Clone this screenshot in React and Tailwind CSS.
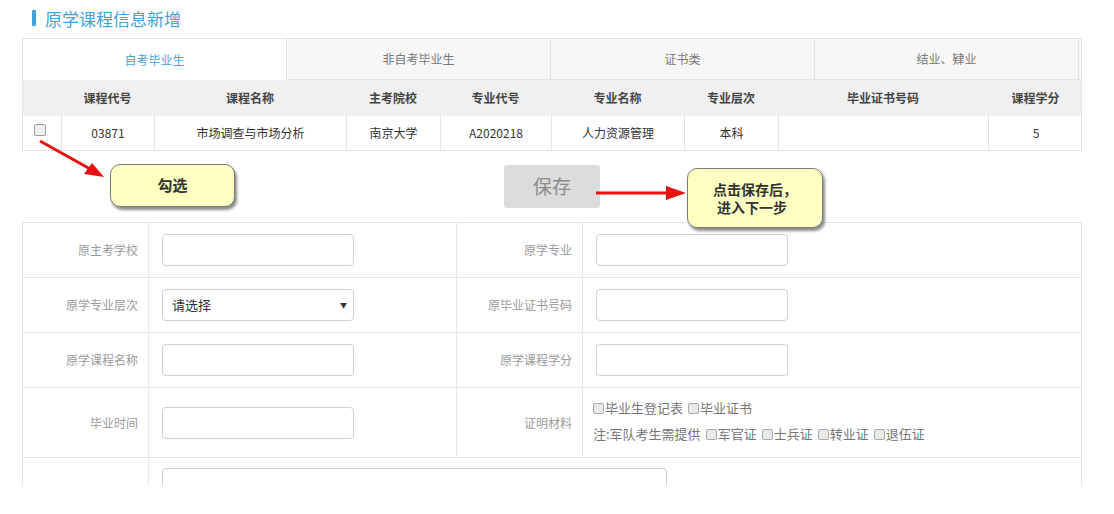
import React from "react";

const font = { fontFamily: '"Noto Sans CJK SC", "Noto Sans", sans-serif' };

function Input({ w = "w-[192px]" }) {
  return <div className={`${w} h-[32px] border border-[#cfcfcf] rounded-[4px] bg-white`} />;
}

function Label({ children }) {
  return (
    <div className="flex items-center justify-end pr-[10px] border-r border-[#e6e6e6] text-[12px] text-[#9a9a9a]">
      {children}
    </div>
  );
}

function Item({ children, first }) {
  return (
    <span className={first ? "" : "ml-[5px]"}>
      <span className="inline-block w-[11px] h-[11px] border border-[#a9a9a9] rounded-[2px] bg-[#e9e9e9] mr-[1px] align-[-1px]" />
      {children}
    </span>
  );
}

export default function App() {
  const cols = "grid grid-cols-[38px_93px_192px_94px_111px_133px_94px_210px_95px]";
  const heads = ["", "课程代号", "课程名称", "主考院校", "专业代号", "专业名称", "专业层次", "毕业证书号码", "课程学分"];
  const data = ["03871", "市场调查与市场分析", "南京大学", "A2020218", "人力资源管理", "本科", "", "5"];
  return (
    <div className="relative w-[1114px] h-[514px] overflow-hidden bg-white" style={font}>
      <div className="pl-[22px] w-[1082px]">
        {/* title */}
        <div className="flex items-center h-[38px] pl-[10px] pb-[2px]">
          <div className="w-[4px] h-[16px] bg-[#3ea3dc] rounded-[1px]" />
          <div className="ml-[9px] text-[17px] text-[#3ea3dc] leading-none">原学课程信息新增</div>
        </div>

        {/* tabs */}
        <div className="border border-[#e3e3e3]">
          <div className="flex h-[41px] text-[12px]">
            <div className="w-[263px] flex items-center justify-center bg-white text-[#47a5d9]">自考毕业生</div>
            <div className="w-[264px] flex items-center justify-center bg-[#f7f7f7] border-l border-b border-[#e3e3e3] text-[#777]">非自考毕业生</div>
            <div className="w-[264px] flex items-center justify-center bg-[#f7f7f7] border-l border-b border-[#e3e3e3] text-[#777]">证书类</div>
            <div className="w-[264px] flex items-center justify-center bg-[#f7f7f7] border-l border-b border-[#e3e3e3] text-[#777]">结业、肄业</div>
            <div className="flex-1 bg-[#f7f7f7] border-l border-b border-[#e3e3e3]" />
          </div>
          <div className={`${cols} h-[36px] bg-[#f0f0f0] text-[12px] font-bold text-[#444]`}>
            {heads.map((h, i) => (
              <div key={i} className="flex items-center justify-center">{h}</div>
            ))}
          </div>
          <div className={`${cols} h-[34px] text-[12px] text-[#333]`}>
            <div className="flex items-start justify-center pt-[8px]">
              <span className="inline-block w-[12px] h-[12px] border border-[#a0a0a0] rounded-[2px] bg-[#ececec] ml-[-4px]" />
            </div>
            {data.map((d, i) => (
              <div key={i} className="flex items-center justify-center border-l border-[#e3e3e3]">{d}</div>
            ))}
          </div>
        </div>

        {/* save */}
        <div className="flex justify-center mt-[14px] mb-[14px]">
          <div className="w-[96px] h-[43px] rounded-[3px] bg-[#dcdcdc] text-[#8a8a8a] text-[19px] flex items-center justify-center">保存</div>
        </div>

        {/* form */}
        <div className="h-[263px] overflow-hidden">
          <div className="border-x border-t border-[#e3e3e3] grid grid-cols-[126px_308px_126px_498px]">
            <Label>原主考学校</Label>
            <div className="h-[54px] flex items-center pl-[13px] border-r border-[#e6e6e6]"><Input /></div>
            <Label>原学专业</Label>
            <div className="flex items-center pl-[13px]"><Input /></div>

            <div className="col-span-4 border-t border-[#e6e6e6]" />
            <Label>原学专业层次</Label>
            <div className="h-[54px] flex items-center pl-[13px] border-r border-[#e6e6e6]">
              <div className="w-[192px] h-[32px] border border-[#cfcfcf] rounded-[4px] bg-white flex items-center justify-between pl-[9px] pr-[6px] text-[13px] text-[#333]">
                <span>请选择</span>
                <span className="text-[7px] text-[#333]">▼</span>
              </div>
            </div>
            <Label>原毕业证书号码</Label>
            <div className="flex items-center pl-[13px]"><Input /></div>

            <div className="col-span-4 border-t border-[#e6e6e6]" />
            <Label>原学课程名称</Label>
            <div className="h-[54px] flex items-center pl-[13px] border-r border-[#e6e6e6]"><Input /></div>
            <Label>原学课程学分</Label>
            <div className="flex items-center pl-[13px]"><Input /></div>

            <div className="col-span-4 border-t border-[#e6e6e6]" />
            <Label>毕业时间</Label>
            <div className="h-[69px] flex items-center pl-[13px] border-r border-[#e6e6e6]"><Input /></div>
            <Label>证明材料</Label>
            <div className="flex flex-col justify-center pl-[10px] pb-[3px] text-[13px] text-[#777] gap-[8px] leading-[18px]">
              <div><Item first>毕业生登记表</Item><Item>毕业证书</Item></div>
              <div>注:军队考生需提供<Item>军官证</Item><Item>士兵证</Item><Item>转业证</Item><Item>退伍证</Item></div>
            </div>

            <div className="col-span-4 border-t border-[#e6e6e6]" />
            <div className="h-[80px] border-r border-[#e6e6e6]" />
            <div className="col-span-3 pt-[10px] pl-[13px]">
              <div className="w-[505px] h-[60px] border border-[#cfcfcf] rounded-[4px] bg-white" />
            </div>
          </div>
        </div>
      </div>

      {/* arrows */}
      <svg className="absolute left-0 top-0 pointer-events-none" width="1114" height="514">
        <line x1="40" y1="141" x2="92" y2="170" stroke="#e81010" strokeWidth="3" />
        <polygon points="104,177 84,174 92,163" fill="#e81010" />
        <line x1="596" y1="193" x2="670" y2="193" stroke="#e81010" strokeWidth="3" />
        <polygon points="686,193 666,186 666,200" fill="#e81010" />
      </svg>

      {/* callouts */}
      <div className="absolute left-[110px] top-[164px] w-[125px] h-[43px] rounded-[10px] bg-[#ffffc2] border border-[#7a7a7a] shadow-[2px_3px_3px_rgba(0,0,0,0.45)] flex items-center justify-center text-[15px] font-bold text-[#333]">
        勾选
      </div>
      <div className="absolute left-[687px] top-[168px] w-[136px] h-[60px] rounded-[10px] bg-[#ffffc2] border border-[#7a7a7a] shadow-[2px_3px_3px_rgba(0,0,0,0.45)] flex flex-col items-center justify-center text-[14px] font-bold text-[#333] leading-[18px]">
        <div>点击保存后，</div>
        <div className="-ml-[6px]">进入下一步</div>
      </div>
    </div>
  );
}
